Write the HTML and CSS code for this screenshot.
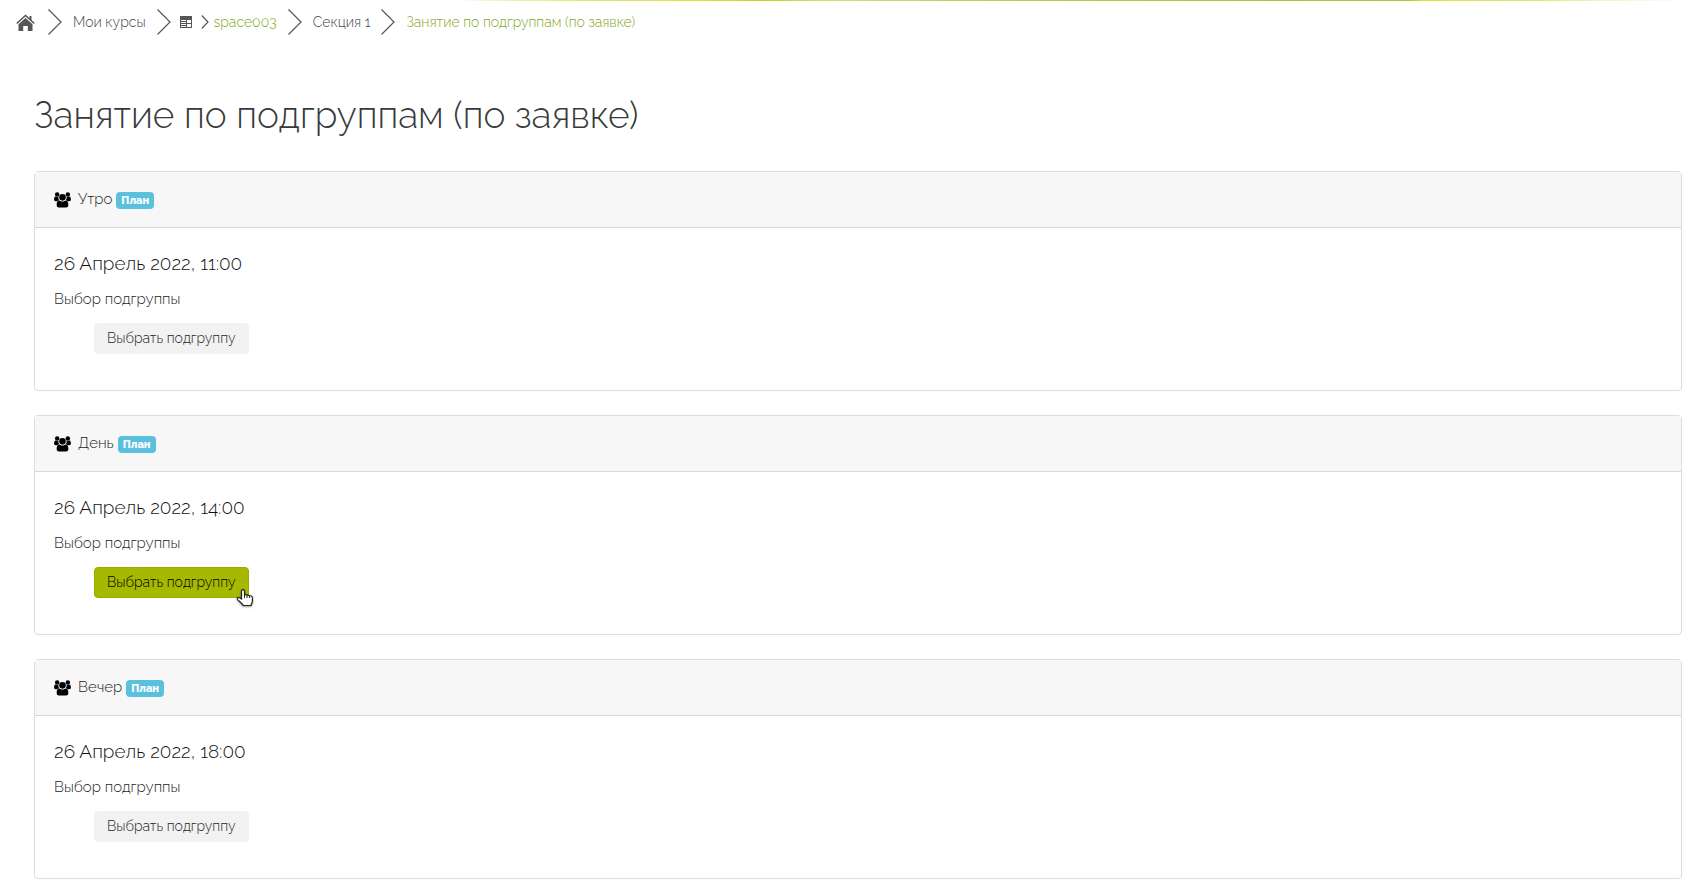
FILE: index.html
```html
<!DOCTYPE html>
<html lang="ru">
<head>
<meta charset="utf-8">
<title>Занятие по подгруппам (по заявке)</title>
<link rel="stylesheet" href="styles.css">
</head>
<body>
<svg class="sprite" aria-hidden="true">
  <symbol id="arrow" viewBox="0 0 14 26"><path d="M.5.5 13 13 .5 25.5" fill="none" stroke="currentColor" stroke-width="1.2"/></symbol>
  <symbol id="people" viewBox="0 0 16 15">
    <circle cx="3" cy="2.3" r="2.1"/><circle cx="13" cy="2.3" r="2.1"/>
    <path d="M.1 7.3C.1 5.2.6 4.3 1.5 4.3c.6.5 1.8.6 2.7.2C3.8 6 4.3 7 5 7.7 4.2 7.7 3.6 8 3.1 8.6H1.5C.6 8.6.1 8.1.1 7.3ZM15.9 7.3c0-2.1-.5-3-1.4-3-.6.5-1.800.6-2.700.2.4 1.500-.1 2.500-.8 3.200.8 0 1.400.3 1.900.9h1.600c.9 0 1.400-.5 1.400-1.300Z"/>
    <circle cx="8" cy="5" r="3.1"/>
    <path d="M2.500 12.200c0-2.800.8-4.300 2.500-4.300.7 0 1.300 1.100 3 1.100s2.300-1.100 3-1.100c1.700 0 2.500 1.500 2.500 4.300 0 1.500-.8 2.300-2 2.300h-7c-1.200 0-2-.8-2-2.300Z"/>
  </symbol>
</svg>
<div class="stripe"></div>
<nav class="crumbs" aria-label="Навигация">
  <a class="home" href="#" aria-label="В начало"><svg viewBox="0 0 19 17"><path d="M.7 9.500 9.500 1.500l8.800 8" fill="none" stroke="currentColor" stroke-width="1.600"/><path d="M13.500 2h2v4.500l-2-1.800Z" fill="currentColor"/><path d="M9.500 4 16.500 10.300V17h-4.700v-5H7.200v5H2.500v-6.700Z" fill="currentColor"/></svg></a>
  <svg class="arrow"><use href="#arrow"/></svg>
  <a href="#">Мои курсы</a>
  <svg class="arrow"><use href="#arrow"/></svg>
  <span class="course">
    <svg class="grid-icon" viewBox="0 0 12 12"><path fill="currentColor" fill-rule="evenodd" d="M0 0h12v12H0ZM1 4v1h5V4ZM7 4v3h4V4ZM1 6v1h5V6ZM1 8v1h5V8ZM7 8v3h4V8ZM1 10v1h5v-1Z"/></svg>
    <svg class="arrow-small" viewBox="0 0 8 14"><path d="M.8.5 7 7 .8 13.500" fill="none" stroke="currentColor" stroke-width="1.200"/></svg>
    <a class="green" href="#">space003</a>
  </span>
  <svg class="arrow"><use href="#arrow"/></svg>
  <a href="#">Секция 1</a>
  <svg class="arrow"><use href="#arrow"/></svg>
  <a class="green" href="#" aria-current="page">Занятие по подгруппам (по заявке)</a>
</nav>
<main>
  <h1>Занятие по подгруппам (по заявке)</h1>
  <section class="card">
    <h2><svg class="people"><use href="#people"/></svg>Утро <span class="badge">План</span></h2>
    <div class="body">
      <p class="date">26 Апрель 2022, 11:00</p>
      <p class="label">Выбор подгруппы</p>
      <button type="button">Выбрать подгруппу</button>
    </div>
  </section>
  <section class="card">
    <h2><svg class="people"><use href="#people"/></svg>День <span class="badge">План</span></h2>
    <div class="body">
      <p class="date">26 Апрель 2022, 14:00</p>
      <p class="label">Выбор подгруппы</p>
      <button type="button" class="active">Выбрать подгруппу
        <svg class="pointer" viewBox="0 0 18 18"><path d="M5.500 10V2.200c0-2.200 3-2.200 3 0V6c.8-.7 2.200-.4 2.500.4.800-.6 2-.3 2.400.6 1-.6 3 0 3 1.700V12c0 2-1.400 3-1.400 4.500H7.200C6.500 14.500 3 12.300 1.600 10.500c-1-1.600.8-2.600 2-1.700Z" fill="#fff" stroke="#222" stroke-width="1.200"/><path d="M8.500 6v3M11 6.500V9M13.500 7v2" fill="none" stroke="#222"/></svg>
      </button>
    </div>
  </section>
  <section class="card">
    <h2><svg class="people"><use href="#people"/></svg>Вечер <span class="badge">План</span></h2>
    <div class="body">
      <p class="date">26 Апрель 2022, 18:00</p>
      <p class="label">Выбор подгруппы</p>
      <button type="button">Выбрать подгруппу</button>
    </div>
  </section>
</main>
</body>
</html>
```
FILE: styles.css
```css
* { box-sizing: border-box; }
body {
  margin: 0;
  background: #fff;
  color: #222527;
  font-family: Raleway, Lato, "Open Sans", sans-serif;
  font-size: 15px;
  font-weight: 300;
  line-height: 24px;
}
.sprite { display: none; }
.stripe {
  height: 1px;
  background: linear-gradient(90deg, #fff 27%, #f0f3c8 29%, #e6e86a 34%, #e0e23c 41%, #c8cf20 45%, #d8dd72 49%, #c3d162 55%, #b5c830 66%, #b3c12a 75%, #b8c22a 83%, #e0e23c 84%, #e6e86a 91%, #f3f5d0 95%, #fff);
}
.crumbs {
  display: flex;
  align-items: center;
  gap: 11px;
  height: 42px;
  padding-left: 16px;
  color: #555;
  font-size: 14px;
}
.crumbs a { color: #444; text-decoration: none; }
.crumbs a.green { color: #84a81c; }
.crumbs .home { display: flex; margin-right: 2px; color: #555; }
.home svg { width: 19px; height: 17px; }
.arrow { width: 14px; height: 26px; }
.arrow-small { width: 8px; height: 14px; margin: 0 5px 0 9px; }
.grid-icon { width: 12px; height: 12px; }
.course { display: flex; align-items: center; margin-left: -2px; }
main { padding: 45px 14px 16px 34px; }
h1 {
  margin: 0 0 28px;
  color: #373a3c;
  font-size: 37px;
  font-weight: 300;
  line-height: 55px;
}
.card {
  margin-bottom: 24px;
  border: 1px solid #dcdcdc;
  border-radius: 4px;
}
h2 {
  display: flex;
  align-items: center;
  gap: 4px;
  margin: 0;
  padding: 16px 19px;
  border-bottom: 1px solid #d8d8d8;
  background: #f7f7f7;
  font-size: 15px;
  font-weight: 300;
  line-height: 23px;
}
.people { width: 17px; height: 16px; margin-right: 3px; fill: #000; }
.badge {
  margin-top: 2px;
  padding: 0 5px;
  border-radius: 4px;
  background: #5bc0de;
  color: #fff;
  font-size: 11px;
  font-weight: 800;
  line-height: 17px;
}
.body { padding: 20px 19px 36px; }
.body p { margin: 0; }
.date { color: #111; font-size: 19px; line-height: 30px; }
.body .label { margin: 9px 0 12px; }
button {
  display: block;
  position: relative;
  margin-left: 40px;
  padding: 0 12px;
  border: 1px solid #f2f2f2;
  border-radius: 4px;
  background: #f2f2f2;
  color: #222527;
  font: inherit;
  font-size: 14px;
  line-height: 29px;
}
button.active { border-color: #9aab00; background: #a6b800; color: #000; }
.pointer { position: absolute; right: -6px; bottom: -10px; width: 18px; height: 18px; filter: drop-shadow(0 1px 1px #0006); }
```
